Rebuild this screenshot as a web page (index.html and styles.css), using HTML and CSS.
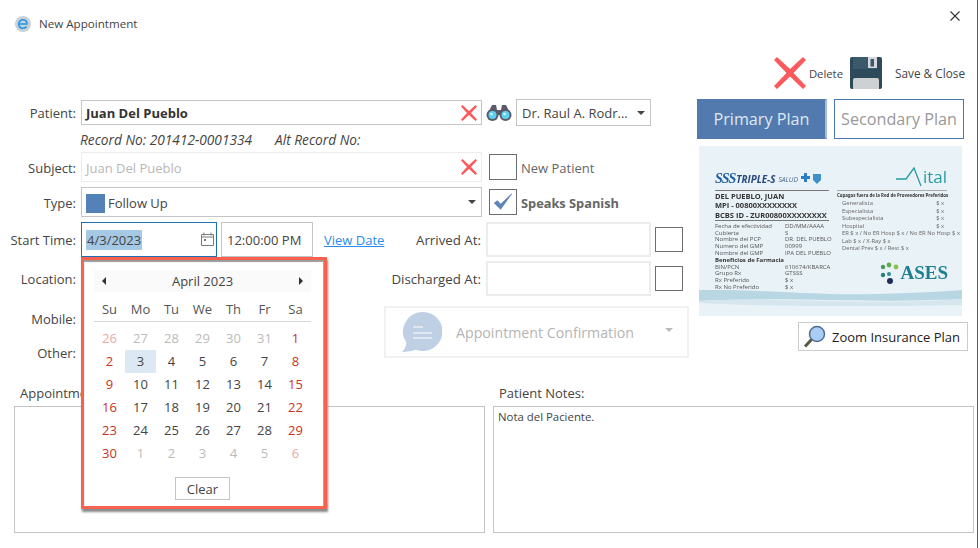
FILE: index.html
```html
<!DOCTYPE html>
<html lang="en">
<head>
<meta charset="utf-8">
<title>New Appointment</title>
<link rel="stylesheet" href="styles.css">
</head>
<body>
<div class="window">
  <header class="titlebar">
    <svg class="app-icon" viewBox="0 0 16 16"><circle cx="8" cy="8" r="8" fill="#c9d1d6"/><path d="M3.8 8h8.2c0-2.6-1.700-4.200-4-4.200S3.800 5.600 3.800 8s1.700 4.200 4.200 4.200c1.500 0 2.800-.6 3.500-1.700" fill="none" stroke="#1e96e8" stroke-width="1.600"/></svg>
    <span class="title">New Appointment</span>
    <svg class="close" viewBox="0 0 10 10"><path d="M.5.500l9 9M9.500.500l-9 9" stroke="#333" stroke-width="1.100"/></svg>
  </header>

  <div class="toolbar">
    <svg class="tool-x" viewBox="0 0 32 32"><path d="M3 0L16 12 29 0l3 3-12.500 13L32 29l-3 3-13-12.500L3 32l-3-3 12.500-13L0 3z" fill="#fb5a5c"/></svg>
    <span class="tool-label delete-label">Delete</span>
    <svg class="tool-save" viewBox="0 0 32 32"><rect width="32" height="32" rx="2" fill="#2d4a5a"/><rect x="3" y="0" width="24" height="12" fill="#3a5a6b"/><rect x="18" y="0" width="9" height="11" fill="#d5d9db"/><rect x="20.500" y="2" width="3.500" height="7.500" fill="#3a5a6b"/><path d="M3 23a2 2 0 0 1 2-2h22a2 2 0 0 1 2 2v9H3z" fill="#cdd1d4"/></svg>
    <span class="tool-label save-label">Save &amp; Close</span>
  </div>

  <main class="main">
    <section class="form">
      <div class="row row-patient">
        <label class="lbl">Patient:</label>
        <div class="field wide bold">Juan Del Pueblo<svg class="clear-x" viewBox="0 0 16 16"><path d="M1.500 0L8 6 14.500 0 16 1.500 10 8l6 6.500-1.500 1.500L8 10l-6.500 6L0 14.500 6 8 0 1.500z" fill="#fb5a5c"/></svg></div>
        <svg class="binoculars" viewBox="0 0 26 17"><path d="M6 1h4l1 5h4l1-5h4l5 10H1z" fill="#5c5a68"/><circle cx="6.500" cy="11" r="6" fill="#5c5a68"/><circle cx="19.500" cy="11" r="6" fill="#5c5a68"/><circle cx="6.500" cy="11" r="4" fill="#5cd2f2"/><circle cx="19.500" cy="11" r="4" fill="#5cd2f2"/><circle cx="5.500" cy="10" r="1.300" fill="#d8f6ff"/><circle cx="18.500" cy="10" r="1.300" fill="#d8f6ff"/></svg>
        <div class="field doctor">Dr. Raul A. Rodr...<i class="caret"></i></div>
      </div>

      <div class="row row-record">
        <span>Record No: 201412-0001334</span>
        <span>Alt Record No:</span>
      </div>

      <div class="row row-subject">
        <label class="lbl">Subject:</label>
        <div class="field wide disabled">Juan Del Pueblo<svg class="clear-x" viewBox="0 0 16 16"><path d="M1.500 0L8 6 14.500 0 16 1.500 10 8l6 6.500-1.500 1.500L8 10l-6.500 6L0 14.500 6 8 0 1.500z" fill="#fb5a5c"/></svg></div>
        <span class="box"></span>
        <span class="check-label">New Patient</span>
      </div>

      <div class="row row-type">
        <label class="lbl">Type:</label>
        <div class="field wide"><i class="swatch"></i>Follow Up<i class="caret"></i></div>
        <span class="box"><svg viewBox="0 0 28 26"><path d="M4 14l4-3 3.500 4L23 4h1L11.500 21.500z" fill="#5f86b9"/></svg></span>
        <span class="check-label strong">Speaks Spanish</span>
      </div>

      <div class="row row-start">
        <label class="lbl">Start Time:</label>
        <div class="field date"><span class="selected">4/3/2023</span>
          <svg class="cal-icon" viewBox="0 0 13 14"><path d="M.5 2.500h12v11H.5zM.5 5h12M3 .5v3M10 .5v3" fill="none" stroke="#7a7a7a"/><rect x="3" y="7" width="2" height="2" fill="#7a7a7a"/></svg>
        </div>
        <div class="field time">12:00:00 PM</div>
        <a class="link" href="#">View Date</a>
        <label class="lbl-at arrived">Arrived At:</label>
        <div class="field at"></div>
        <span class="box at-box"></span>

        <div class="popup">
          <div class="cal-head"><i class="tri left"></i><span>April 2023</span><i class="tri right"></i></div>
          <div class="cal-grid dow">
            <span>Su</span><span>Mo</span><span>Tu</span><span>We</span><span>Th</span><span>Fr</span><span>Sa</span>
          </div>
          <div class="cal-grid days">
            <span class="we out">26</span><span class="out">27</span><span class="out">28</span><span class="out">29</span><span class="out">30</span><span class="out">31</span><span class="we">1</span>
            <span class="we">2</span><span class="today">3</span><span>4</span><span>5</span><span>6</span><span>7</span><span class="we">8</span>
            <span class="we">9</span><span>10</span><span>11</span><span>12</span><span>13</span><span>14</span><span class="we">15</span>
            <span class="we">16</span><span>17</span><span>18</span><span>19</span><span>20</span><span>21</span><span class="we">22</span>
            <span class="we">23</span><span>24</span><span>25</span><span>26</span><span>27</span><span>28</span><span class="we">29</span>
            <span class="we">30</span><span class="out">1</span><span class="out">2</span><span class="out">3</span><span class="out">4</span><span class="out">5</span><span class="we out">6</span>
          </div>
          <button class="clear-btn" type="button">Clear</button>
        </div>
      </div>

      <div class="lower">
        <div class="lower-labels">
          <label class="lbl">Location:</label>
          <label class="lbl">Mobile:</label>
          <label class="lbl">Other:</label>
        </div>
        <div class="lower-right">
          <div class="row row-discharged">
            <label class="lbl-at">Discharged At:</label>
            <div class="field at"></div>
            <span class="box at-box"></span>
          </div>
          <div class="confirm">
            <svg class="bubble" viewBox="0 0 40 40"><path d="M21 0a19.500 19.500 0 1 1-7 37.700C10 39 5 39.800 0 40c2-2 4-5.500 4.500-9.500A19.500 19.500 0 0 1 21 0z" fill="#bfd0e4"/><path d="M11 15h10M11 21h19M11 26h19" stroke="#fff" stroke-width="1.200"/></svg>
            <span>Appointment Confirmation</span>
            <i class="caret pale"></i>
          </div>
        </div>
      </div>
    </section>

    <aside class="plans">
      <div class="tabs">
        <div class="tab active">Primary Plan</div>
        <div class="tab">Secondary Plan</div>
      </div>
      <div class="card">
        <div class="card-head">
          <div class="brand"><b class="sss">SSS</b><b class="triple">TRIPLE-S</b><em>SALUD</em>
            <svg viewBox="0 0 22 12"><path d="M4 0h3v3h3v3H7v3H4V6H1V3h3z" fill="#2a7fc4"/><path d="M13 1h8v6l-4 4-4-4z" fill="#3f8fc9"/></svg>
          </div>
          <div class="vital">
            <svg viewBox="0 0 28 20"><path d="M0 12h10l8-11 7 18" fill="none" stroke="#2a9aa2" stroke-width="1.300"/></svg><span>ital</span>
          </div>
        </div>
        <div class="card-body">
          <div class="card-left">
            <p class="name">DEL PUEBLO, JUAN</p>
            <p class="name">MPI - 00800XXXXXXXX</p>
            <p class="name id">BCBS ID - ZUR00800XXXXXXXX</p>
            <dl>
              <dt>Fecha de efectividad</dt><dd>DD/MM/AAAA</dd>
              <dt>Cubierta</dt><dd>S</dd>
              <dt>Nombre del PCP</dt><dd>DR. DEL PUEBLO</dd>
              <dt>Numero del GMP</dt><dd>00999</dd>
              <dt>Nombre del GMP</dt><dd>IPA DEL PUEBLO</dd>
              <dt class="full">Beneficios de Farmacia</dt>
              <dt>BIN/PCN</dt><dd>610674/KBARCA</dd>
              <dt>Grupo Rx</dt><dd>GTSSS</dd>
              <dt>Rx Preferido</dt><dd>$ x</dd>
              <dt>Rx No Preferido</dt><dd>$ x</dd>
            </dl>
          </div>
          <div class="card-right">
            <p class="copay">Copagos fuera de la Red de Proveedores Preferidos</p>
            <div class="cop"><span>Generalista</span><span>$ x</span></div>
            <div class="cop"><span>Especialista</span><span>$ x</span></div>
            <div class="cop"><span>Subespecialista</span><span>$ x</span></div>
            <div class="cop"><span>Hospital</span><span>$ x</span></div>
            <div class="cop"><span>ER $ x / No ER Hosp $ x / No ER No Hosp $ x</span></div>
            <div class="cop"><span>Lab $ x / X-Ray $ x</span></div>
            <div class="cop"><span>Dental Prev $ x / Rest $ x</span></div>
            <div class="ases">
              <svg viewBox="0 0 20 22"><circle cx="3" cy="5" r="2.200" fill="#4a9a5a"/><circle cx="9" cy="3" r="2.400" fill="#5fae4a"/><circle cx="16" cy="5" r="2.400" fill="#8cc04a"/><circle cx="3" cy="13" r="2.200" fill="#2a7f7a"/><circle cx="9" cy="12" r="2" fill="#2a8f9a"/><circle cx="10" cy="19" r="3" fill="#1c2f5a"/></svg>
              <span>ASES</span>
            </div>
          </div>
        </div>
        <svg class="wave" viewBox="0 0 262 26" preserveAspectRatio="none"><path d="M0 0c40-1 90 3 130 4s90-1 132-4v9c-40 2-90 2-132 1S40 9 0 11z" fill="#b9d6e3"/><path d="M0 11c40-2 90-1 132 0s90 1 130-2v6c-40 1-80 1-130 1S40 15 0 13z" fill="#d5e6ee"/></svg>
      </div>
      <button class="zoom-btn" type="button">
        <svg viewBox="0 0 24 24"><circle cx="14" cy="9" r="7.500" fill="#a9cdf5" stroke="#4d6d93" stroke-width="1.500"/><path d="M8.500 14.500L2 21.500" stroke="#5a5648" stroke-width="3"/></svg>
        Zoom Insurance Plan
      </button>
    </aside>
  </main>

  <section class="notes">
    <div class="note-col appt">
      <label>Appointment Notes:</label>
      <div class="note-box"></div>
    </div>
    <div class="note-col pat">
      <label>Patient Notes:</label>
      <div class="note-box">Nota del Paciente.</div>
    </div>
  </section>
</div>
</body>
</html>
```

FILE: styles.css
```css
* { box-sizing: border-box; }
html, body { margin: 0; padding: 0; background: #fff; }
body { font-family: "Open Sans", "Noto Sans", "Liberation Sans", sans-serif; font-size: 13px; color: #444; overflow: hidden; }
.window { width: 978px; height: 548px; border-right: 1px solid #1f6fb5; position: relative; overflow: hidden; }

.titlebar { height: 46px; display: flex; align-items: center; padding: 1px 17px 0 15px; }
.app-icon { width: 16px; height: 16px; margin-right: 8px; }
.title { font-size: 11.600px; color: #444; }
.close { width: 10px; height: 10px; margin-left: auto; margin-top: -16px; }

.toolbar { height: 44px; display: flex; align-items: center; justify-content: flex-end; padding: 0 12px 0 0; margin-top: 5px; }
.tool-x { width: 32px; height: 32px; }
.tool-label { color: #444; }
.delete-label { font-size: 11.300px; margin-left: 3px; margin-right: 7px; }
.tool-save { width: 32px; height: 32px; }
.save-label { font-size: 11.800px; margin-left: 13px; }

.main { display: flex; margin-top: 4px; height: 286px; }
.form { width: 697px; flex: none; }

.row { display: flex; align-items: center; position: relative; }
.lbl { width: 76px; flex: none; text-align: right; margin-right: 5px; }
.field { border: 1px solid #c4c4c4; background: #fff; display: flex; align-items: center; padding-left: 4px; height: 100%; position: relative; color: #444; }
.wide { width: 401px; margin-right: 7px; }
.bold { font-weight: 700; color: #333; }
.disabled { border-color: #ececec; color: #b8b8b8; }
.clear-x { width: 16px; height: 16px; position: absolute; right: 4px; top: 50%; margin-top: -8px; }
.caret { width: 0; height: 0; border: 4px solid transparent; border-top: 4px solid #444; border-bottom: 0; position: absolute; right: 5px; top: 50%; margin-top: -2px; }
.caret.pale { border-top-color: #bbb; right: 14px; margin-top: -4px; }

.row-patient { height: 25px; margin-top: 1px; }
.row-patient .wide { margin-right: 4px; }
.binoculars { width: 26px; height: 17px; margin-right: 4px; }
.doctor { width: 135px; height: 27px; color: #444; padding-left: 5px; }

.row-record { height: 27px; padding: 2px 0 0 80px; gap: 23px; font-style: italic; font-size: 13.700px; color: #444; }

.row-subject { height: 30px; }
.row-subject .lbl, .row-type .lbl, .row-subject .check-label, .row-type .check-label { padding-top: 2px; }
.row-subject .field, .row-type .field { padding-top: 2px; }
.box { width: 28px; height: 26px; border: 1px solid #6e6e6e; display: block; flex: none; background: #fff; }
.box svg { display: block; width: 100%; height: 100%; }
.check-label { margin-left: 4px; color: #666; }
.check-label.strong { font-weight: 700; font-size: 12.800px; }

.row-type { height: 30px; margin-top: 5px; }
.swatch { width: 19px; height: 19px; background: #5581b9; margin-right: 3px; flex: none; }
.row-type .caret { right: 5px; }

.row-start { height: 35px; margin-top: 5px; }
.date { width: 136px; border-color: #1f6fb0; margin-right: 4px; }
.selected { background: #a5c8e4; color: #444; padding: 0 1px; line-height: 20px; }
.cal-icon { width: 13px; height: 14px; position: absolute; right: 2px; top: 9px; }
.time { width: 92px; padding-left: 5px; margin-right: 11px; }
.link { color: #2a8cf0; text-decoration: underline; width: 72px; }
.lbl-at { text-align: right; margin-right: 5px; color: #444; font-size: 13.300px; }
.arrived { width: 85px; flex: none; }
.at { width: 165px; border-color: #ececec; border-width: 2px; margin-right: 4px; flex: none; }
.at-box { height: 25px; }

.lower { display: flex; margin-top: 4px; }
.lower-labels { width: 384px; flex: none; }
.lower-labels .lbl { display: block; }
.lower-labels .lbl:nth-child(1) { margin-top: 9px; }
.lower-labels .lbl:nth-child(2) { margin-top: 22px; }
.lower-labels .lbl:nth-child(3) { margin-top: 16px; }
.lower-right { width: 305px; }
.row-discharged { height: 35px; justify-content: flex-end; padding-right: 6px; }
.row-discharged .field { height: 35px; }
.confirm { width: 305px; height: 52px; margin: 10px 0 0; border: 2px solid #f1f1f1; display: flex; align-items: center; padding: 1px 0 0 16px; color: #b5b5b5; position: relative; font-size: 14.200px; }
.bubble { width: 40px; height: 40px; margin-right: 14px; margin-top: -1px; }

.popup { position: absolute; left: 81px; top: 35px; width: 246px; height: 252px; background: #fff; border: 3px solid #f7614f; box-shadow: 1px 3px 2px #8a8a8a, inset 0 2px 1px #9a9a9a, inset -1px 0 0 #aaa; padding: 10px 13px 0 10px; z-index: 5; display: flex; flex-direction: column; align-items: center; }
.cal-head { width: 217px; height: 22px; background: #fafafa; display: flex; align-items: center; justify-content: center; position: relative; color: #444; flex: none; }
.tri { position: absolute; top: 7px; width: 0; height: 0; border: 4px solid transparent; }
.tri.left { left: 8px; border-right: 4px solid #333; border-left: 0; }
.tri.right { right: 8px; border-left: 4px solid #333; border-right: 0; }
.cal-grid { display: grid; grid-template-columns: repeat(7, 31px); width: 217px; text-align: center; flex: none; }
.dow { height: 30px; padding-top: 4px; border-bottom: 1px solid #d8d8d8; align-items: center; color: #555; }
.days { grid-auto-rows: 23px; margin-top: 5px; line-height: 23px; color: #444; }
.days .we { color: #c8321f; }
.days .out { color: #bbb; }
.days .we.out { color: #eba99f; }
.days .today { background: #dce9f5; }
.clear-btn { width: 55px; height: 23px; margin-top: 12px; border: 1px solid #c4c4c4; background: #fff; font: inherit; color: #444; padding: 0; flex: none; }

.plans { width: 268px; flex: none; }
.tabs { display: flex; gap: 7px; }
.tab { width: 130px; height: 40px; border: 1px solid #4a78ad; color: #999; font-size: 16.200px; display: flex; align-items: center; justify-content: center; white-space: nowrap; }
.tab.active { background: #527aae; color: #dfe8f2; border-width: 1px 2px 1px 1px; border-color: #527aae #a6bdd8 #527aae #527aae; }

.card { width: 263px; height: 170px; margin: 7px 0 0 2px; background: #e9f2f6; position: relative; overflow: hidden; padding: 22px 15px 0 16px; color: #444; filter: blur(.3px); }
.card-head { display: flex; justify-content: space-between; height: 22px; }
.brand { display: flex; align-items: center; color: #1e5fa0; height: 22px; width: 113px; white-space: nowrap; }
.brand svg { width: 22px; height: 12px; margin-left: 2px; flex: none; }
.sss { font-style: italic; font-size: 14px; font-family: "Liberation Serif", serif; margin-right: 1px; letter-spacing: -1px; }
.triple { font-size: 9.800px; font-style: italic; color: #25477a; margin-right: 3px; }
.brand em { font-size: 6.800px; color: #46688a; }
.vital { display: flex; align-items: flex-end; color: #2a9aa2; font-size: 17px; line-height: 20px; margin-top: -1px; height: 20px; }
.vital svg { width: 28px; height: 20px; margin-right: -1px; flex: none; }
.card-body { display: flex; gap: 8px; }
.card-left { width: 114px; flex: none; border-top: 1px solid #777; padding-top: 1px; }
.card-right { width: 110px; flex: none; border-top: 1px solid #aaa; padding-top: 1px; position: relative; }
.name { margin: 0; font-size: 7.500px; line-height: 9.300px; font-weight: 700; color: #333; white-space: nowrap; }
.id { border-bottom: 1px solid #777; }
dl { margin: 2px 0 0; display: grid; grid-template-columns: 70px 1fr; font-size: 6px; line-height: 6.800px; white-space: nowrap; color: #555; }
dd { margin: 0; }
.full { grid-column: 1 / -1; font-weight: 700; color: #333; }
.copay { margin: 0 0 1px; font-size: 4.400px; line-height: 7px; font-weight: 700; white-space: nowrap; color: #333; }
.cop { display: flex; justify-content: space-between; font-size: 5.800px; line-height: 7.500px; padding: 0 3px 0 5px; white-space: nowrap; color: #666; }
.ases { position: absolute; top: 71px; right: -1px; display: flex; align-items: center; color: #1e7f90; font-family: "Liberation Serif", serif; font-weight: 700; font-size: 19px; }
.ases svg { width: 20px; height: 22px; flex: none; }
.wave { position: absolute; left: 0; bottom: 0; width: 100%; height: 26px; }

.zoom-btn { width: 170px; height: 29px; margin: 6px 0 0 101px; background: #fff; border: 1px solid #ccc; display: flex; align-items: center; gap: 5px; padding: 0 0 0 4px; font: inherit; font-size: 13px; color: #222; white-space: nowrap; }
.zoom-btn svg { width: 24px; height: 24px; flex: none; }

.notes { display: flex; margin-top: 0; padding-left: 14px; }
.note-col label { display: block; height: 21px; line-height: 16px; padding-left: 6px; }
.note-box { border: 1px solid #c4c4c4; height: 127px; padding: 1px 4px; font-size: 11.400px; line-height: 18px; color: #444; }
.appt { width: 471px; margin-right: 8px; }
.pat { width: 481px; }
```
